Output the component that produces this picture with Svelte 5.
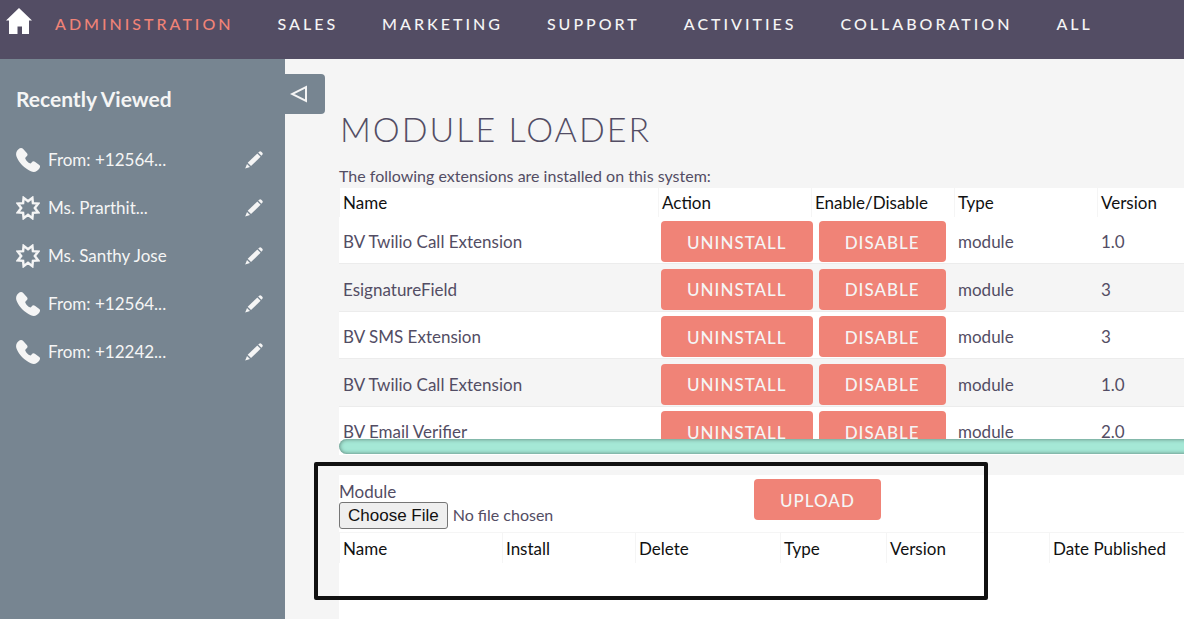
<script lang="ts">
  type Recent = { id: number; kind: 'call' | 'lead'; label: string };
  type Extension = { id: number; name: string; type: string; version: string };

  const menu = ['Administration', 'Sales', 'Marketing', 'Support', 'Activities', 'Collaboration', 'All'];

  const recent: Recent[] = [
    { id: 1, kind: 'call', label: 'From: +12564...' },
    { id: 2, kind: 'lead', label: 'Ms. Prarthit...' },
    { id: 3, kind: 'lead', label: 'Ms. Santhy Jose' },
    { id: 4, kind: 'call', label: 'From: +12564...' },
    { id: 5, kind: 'call', label: 'From: +12242...' },
  ];

  const extensions: Extension[] = [
    { id: 1, name: 'BV Twilio Call Extension', type: 'module', version: '1.0' },
    { id: 2, name: 'EsignatureField', type: 'module', version: '3' },
    { id: 3, name: 'BV SMS Extension', type: 'module', version: '3' },
    { id: 4, name: 'BV Twilio Call Extension', type: 'module', version: '1.0' },
    { id: 5, name: 'BV Email Verifier', type: 'module', version: '2.0' },
  ];

  let active = $state('Administration');
</script>

<div class="page">
  <nav class="topbar" aria-label="Main">
    <a class="home" href="#home" aria-label="Home">
      <svg viewBox="0 0 26 26" width="26" height="26">
        <path d="M13 0 L26 12.5 H23 V26 H16 V18.5 H11.5 V26 H3 V12.5 H0 Z" fill="#fff" />
      </svg>
    </a>
    {#each menu as item (item)}
      <a class="menu-item" class:active={active === item} href="#{item.toLowerCase()}" onclick={() => (active = item)}>
        {item}
      </a>
    {/each}
  </nav>

  <div class="body">
    <aside class="sidebar">
      <h2>Recently Viewed</h2>
      <ul>
        {#each recent as entry (entry.id)}
          <li>
            <a class="entry" href="#record-{entry.id}">
              {#if entry.kind === 'call'}
                <svg viewBox="0 0 24 24" width="24" height="24">
                  <path
                    d="M2.500 1.200 C4 -.2 6 -.3 7.200 1 L11 5.200 C12 6.600 11.600 7.700 10.200 8.800 C9.200 9.600 9 10.200 9.600 11.200 C10.800 13.200 12.200 14.600 13.800 15.300 C14.600 15.600 15 15.200 15.600 14.400 C16.600 13 17.800 12.900 18.900 13.700 L23.300 17 C24.400 18.100 24.200 19.400 23.200 20.800 C21 23.900 18 24.600 14.800 23.200 C8.500 20.400 3 15 .6 8.800 C-.5 5.900 .2 3.200 2.500 1.200 Z"
                    fill="#f5f5f5"
                  />
                </svg>
              {:else}
                <svg viewBox="-12 -12 24 24" width="24" height="24">
                  <path
                    d="M0 -6.800 L4.400 -10.200 L4.900 -4.900 L10.200 -4.400 L6.800 0 L10.200 4.400 L4.900 4.900 L4.400 10.200 L0 6.800 L-4.400 10.200 L-4.900 4.900 L-10.200 4.400 L-6.800 0 L-10.200 -4.400 L-4.900 -4.900 L-4.400 -10.200 Z"
                    fill="none"
                    stroke="#f5f5f5"
                    stroke-width="2.400"
                  />
                </svg>
              {/if}
              <span>{entry.label}</span>
            </a>
            <button class="edit" type="button" aria-label="Edit {entry.label}">
              <svg viewBox="0 0 18 18" width="18" height="18">
                <path d="M13.200 1.600 L14.200 .7 Q15.300 -.2 16.300 .8 L17.300 1.800 Q18.200 2.700 17.300 3.800 L16.400 4.800 Z" fill="#f5f5f5" />
                <path d="M12.300 2.400 L15.600 5.700 L6 15.100 L2.700 11.800 Z" fill="#f5f5f5" />
                <path d="M2 12.900 L5 15.900 L.2 17.600 Z" fill="#f5f5f5" />
              </svg>
            </button>
          </li>
        {/each}
      </ul>
      <button class="toggle" type="button" aria-label="Collapse sidebar">
        <svg viewBox="0 0 18 18" width="18" height="18">
          <path d="M16 2 V16 L2 9 Z" fill="none" stroke="#f5f5f5" stroke-width="2" />
        </svg>
      </button>
    </aside>

    <main>
      <h1>Module Loader</h1>
      <p class="intro">The following extensions are installed on this system:</p>

      <section class="installed">
        <div class="scroller">
          <table class="extensions">
            <colgroup>
              <col class="c-name" />
              <col class="c-action" />
              <col class="c-mid" />
              <col class="c-mid" />
              <col />
            </colgroup>
            <thead>
              <tr>
                <th>Name</th>
                <th>Action</th>
                <th>Enable/Disable</th>
                <th>Type</th>
                <th>Version</th>
              </tr>
            </thead>
            <tbody>
              {#each extensions as ext (ext.id)}
                <tr>
                  <td>{ext.name}</td>
                  <td colspan="2" class="controls">
                    <div class="buttons">
                      <button class="btn" type="button">Uninstall</button>
                      <button class="btn" type="button">Disable</button>
                    </div>
                  </td>
                  <td>{ext.type}</td>
                  <td>{ext.version}</td>
                </tr>
              {/each}
            </tbody>
          </table>
        </div>
        <div class="scrollbar"></div>
      </section>

      <section class="upload">
        <div class="upload-form">
          <div class="file">
            <label for="module-file">Module</label>
            <input id="module-file" type="file" />
          </div>
          <button class="btn" type="button">Upload</button>
        </div>
        <table class="packages">
          <colgroup>
            <col class="p-name" />
            <col class="p-install" />
            <col class="p-delete" />
            <col class="p-type" />
            <col class="p-version" />
            <col />
          </colgroup>
          <thead>
            <tr>
              <th>Name</th>
              <th>Install</th>
              <th>Delete</th>
              <th>Type</th>
              <th>Version</th>
              <th>Date Published</th>
            </tr>
          </thead>
        </table>
        <div class="highlight"></div>
      </section>
    </main>
  </div>
</div>

<style>
  :global(body) {
    margin: 0;
    background: #f5f5f5;
  }

  .page {
    display: flex;
    flex-direction: column;
    height: 100vh;
    overflow: hidden;
    font-family: Lato, 'Liberation Sans', sans-serif;
    font-size: 16px;
    line-height: 20px;
    color: #534d64;
  }

  .topbar {
    display: flex;
    align-items: flex-start;
    flex-shrink: 0;
    gap: 44px;
    height: 59px;
    padding-left: 6px;
    box-sizing: border-box;
    background: #534d64;
  }

  .home {
    margin: 8px -21px 0 0;
    line-height: 0;
  }

  .menu-item {
    margin-top: 14px;
    color: #f5f5f5;
    font-weight: 500;
    letter-spacing: 3px;
    text-decoration: none;
    text-transform: uppercase;
    white-space: nowrap;
  }

  .menu-item.active {
    color: #f08377;
  }

  .body {
    display: flex;
    flex: 1;
    min-height: 0;
  }

  .sidebar {
    position: relative;
    flex: 0 0 285px;
    background: #778591;
    color: #f5f5f5;
  }

  h2 {
    margin: 27px 0 0 16px;
    font-size: 21px;
    line-height: 26px;
    font-weight: 700;
  }

  ul {
    margin: 24px 0 0;
    padding: 0 22px 0 16px;
    list-style: none;
    font-size: 17px;
  }

  li {
    display: flex;
    align-items: center;
    justify-content: space-between;
    height: 48px;
  }

  .entry {
    display: flex;
    align-items: center;
    gap: 8px;
    color: inherit;
    text-decoration: none;
  }

  .edit {
    padding: 0;
    border: 0;
    background: none;
    line-height: 0;
  }

  .toggle {
    position: absolute;
    top: 15px;
    left: 100%;
    width: 40px;
    height: 40px;
    padding: 0 0 0 5px;
    border: 0;
    border-radius: 0 4px 4px 0;
    background: #778591;
    text-align: left;
    line-height: 0;
  }

  main {
    flex: 1;
    display: flex;
    flex-direction: column;
    min-width: 0;
    padding-left: 54px;
  }

  h1 {
    margin: 49px 0 0 1px;
    font-size: 34px;
    line-height: 42px;
    font-weight: 300;
    letter-spacing: 2px;
    text-transform: uppercase;
  }

  .intro {
    margin: 16px 0 2px;
  }

  .installed {
    background: #fff;
    padding-bottom: 1px;
    overflow: hidden;
  }

  .scroller {
    height: 251px;
    overflow: hidden;
  }

  table {
    width: 100%;
    table-layout: fixed;
    border-collapse: separate;
    border-spacing: 0;
    font-size: 17px;
  }

  .c-name { width: 319px; }
  .c-action { width: 153px; }
  .c-mid { width: 143px; }

  th {
    height: 29px;
    padding: 0 0 0 3px;
    border-left: 1px solid #f5f5f5;
    box-sizing: border-box;
    color: #111;
    font-weight: 400;
    text-align: left;
    white-space: nowrap;
  }

  td {
    height: 47px;
    padding: 4px 0 0 4px;
    border-bottom: 1px solid #ececec;
    box-sizing: border-box;
  }

  tbody tr:nth-child(even) {
    background: #f5f5f5;
  }

  tbody tr:nth-child(even) td {
    height: 48px;
  }

  td.controls {
    padding: 3px 0 0 3px;
  }

  .buttons {
    display: flex;
    gap: 6px;
  }

  .btn {
    height: 41px;
    padding: 2px 26px 0;
    border: 0;
    border-radius: 4px;
    background: #f08377;
    color: #f5f5f5;
    font: 500 17px/20px Lato, 'Liberation Sans', sans-serif;
    letter-spacing: 1px;
    text-transform: uppercase;
  }

  /* the bar runs on past the right edge of the window */
  .scrollbar {
    height: 15px;
    margin-right: -8px;
    border-radius: 8px 0 0 8px;
    background: #a5e8d6;
    box-shadow: inset 0 0 4px rgba(0, 0, 0, 0.5);
  }

  .upload {
    position: relative;
    flex: 1;
    margin-top: 20px;
    background: #fff;
  }

  .upload-form {
    display: flex;
    align-items: flex-start;
    padding: 4px 0 3px;
  }

  .file {
    flex: 0 0 415px;
    padding-top: 3px;
  }

  .file label,
  .file input {
    display: block;
  }

  .file label {
    font-size: 17px;
  }

  .file input {
    font: 16px/20px Lato, 'Liberation Sans', sans-serif;
    color: #534d64;
  }

  .file input::file-selector-button {
    height: 27px;
    margin: 0 5px 0 0;
    padding: 0 8px;
    border: 1px solid #767676;
    border-radius: 3px;
    background: #efefef;
    color: #111;
    font: 17px/20px 'Liberation Sans', sans-serif;
  }

  .packages th {
    height: 31px;
    padding-top: 2px;
    border-top: 1px solid #f5f5f5;
  }

  .p-name { width: 163px; }
  .p-install { width: 133px; }
  .p-delete { width: 145px; }
  .p-type { width: 106px; }
  .p-version { width: 163px; }

  .highlight {
    position: absolute;
    top: -13px;
    left: -25px;
    width: 666px;
    height: 130px;
    border: 4px solid #111;
    border-radius: 2px;
    pointer-events: none;
  }
</style>
